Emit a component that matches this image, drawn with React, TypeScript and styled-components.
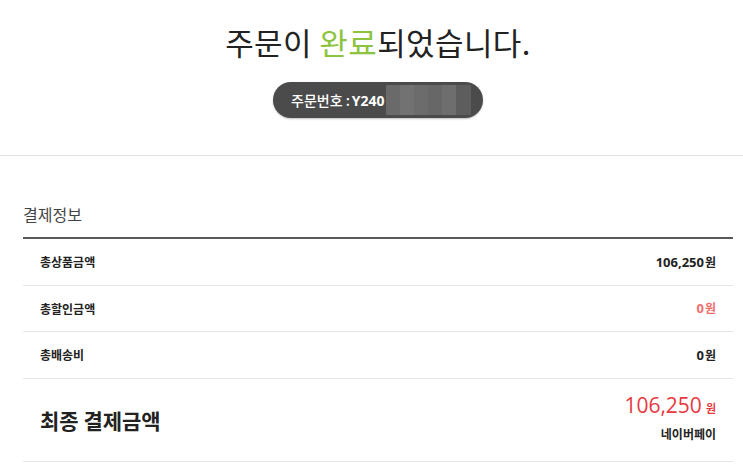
import React from "react";
import styled, { createGlobalStyle } from "styled-components";

const GlobalStyle = createGlobalStyle`
  * { box-sizing: border-box; }
  body {
    margin: 0;
    background: #fff;
    font-family: "Noto Sans CJK KR", "Noto Sans", sans-serif;
    color: #222;
  }
`;

const Header = styled.header`
  display: flex;
  flex-direction: column;
  align-items: center;
  padding: 20px 0 37px 13px;
  border-bottom: 1px solid #e2e2e2;
`;

const Title = styled.h1`
  margin: 0;
  font-size: 31px;
  font-weight: 400;
  line-height: 44px;
  letter-spacing: 0.4px;
  color: #222;
`;

const Accent = styled.span`
  color: #8cc43f;
`;

const OrderPill = styled.div`
  margin-top: 18px;
  width: 210px;
  height: 36px;
  border-radius: 18px;
  background: #4b4b4b;
  box-shadow: 0 1px 2px rgba(0, 0, 0, 0.25);
  display: flex;
  align-items: center;
  padding-left: 18px;
  color: #fff;
  font-size: 14px;
  font-weight: 500;
`;

const OrderNo = styled.span`
  font-family: "Open Sans", "Noto Sans CJK KR", sans-serif;
  font-weight: 700;
  margin-left: 2px;
`;

const Blur = styled.span`
  display: flex;
  height: 30px;
  margin-left: 1px;
`;

const BlurCell = styled.span<{ $shade: string; $w: number }>`
  width: ${(p) => p.$w}px;
  background: ${(p) => p.$shade};
`;

const Section = styled.section`
  padding: 46px 10px 0 23px;
`;

const SectionTitle = styled.h2`
  margin: 0;
  font-size: 16px;
  font-weight: 400;
  color: #444;
  line-height: 24px;
  padding-bottom: 11px;
  border-bottom: 2px solid #5a5a5a;
`;

const Row = styled.div<{ $tall?: boolean }>`
  display: flex;
  justify-content: space-between;
  align-items: center;
  height: ${(p) => (p.$tall ? 83 : 46.5)}px;
  padding: 0 17px 0 17px;
  border-bottom: 1px solid #e6e6e6;
`;

const Label = styled.span<{ $big?: boolean }>`
  font-size: ${(p) => (p.$big ? 21 : 12)}px;
  font-weight: 700;
  color: #222;
`;

const Amount = styled.span<{ $red?: boolean }>`
  font-family: "Open Sans", "Noto Sans CJK KR", sans-serif;
  font-size: 13px;
  font-weight: 700;
  color: ${(p) => (p.$red ? "#ef6f6c" : "#222")};
`;

const Won = styled.span`
  font-family: "Noto Sans CJK KR", sans-serif;
  font-size: 12px;
  font-weight: 700;
  margin-left: 1px;
`;

const TotalBox = styled.div`
  display: flex;
  flex-direction: column;
  align-items: flex-end;
  gap: 4px;
  margin-top: -6px;
`;

const TotalAmount = styled.span`
  font-family: "Open Sans", "Noto Sans CJK KR", sans-serif;
  font-size: 21px;
  font-weight: 400;
  color: #e63a3f;
  line-height: 26px;
`;

const TotalWon = styled.span`
  font-family: "Noto Sans CJK KR", sans-serif;
  font-size: 11px;
  font-weight: 700;
  margin-left: 4px;
`;

const PayMethod = styled.span`
  font-size: 12px;
  font-weight: 700;
  color: #222;
`;

const blur = [
  { shade: "#6a6a6a", w: 14 },
  { shade: "#727272", w: 14 },
  { shade: "#6c6c6c", w: 14 },
  { shade: "#676767", w: 14 },
  { shade: "#6e6e6e", w: 14 },
  { shade: "#5d5d5d", w: 15 },
];

const rows = [
  { label: "총상품금액", value: "106,250", red: false },
  { label: "총할인금액", value: "0", red: true },
  { label: "총배송비", value: "0", red: false },
];

export default function App() {
  return (
    <>
      <GlobalStyle />
      <Header>
        <Title>
          주문이 <Accent>완료</Accent>되었습니다.
        </Title>
        <OrderPill>
          주문번호 : <OrderNo>Y240</OrderNo>
          <Blur>
            {blur.map((b, i) => (
              <BlurCell key={i} $shade={b.shade} $w={b.w} />
            ))}
          </Blur>
        </OrderPill>
      </Header>
      <Section>
        <SectionTitle>결제정보</SectionTitle>
        {rows.map((r) => (
          <Row key={r.label}>
            <Label>{r.label}</Label>
            <Amount $red={r.red}>
              {r.value}
              <Won>원</Won>
            </Amount>
          </Row>
        ))}
        <Row $tall>
          <Label $big>최종 결제금액</Label>
          <TotalBox>
            <TotalAmount>
              106,250<TotalWon>원</TotalWon>
            </TotalAmount>
            <PayMethod>네이버페이</PayMethod>
          </TotalBox>
        </Row>
      </Section>
    </>
  );
}
